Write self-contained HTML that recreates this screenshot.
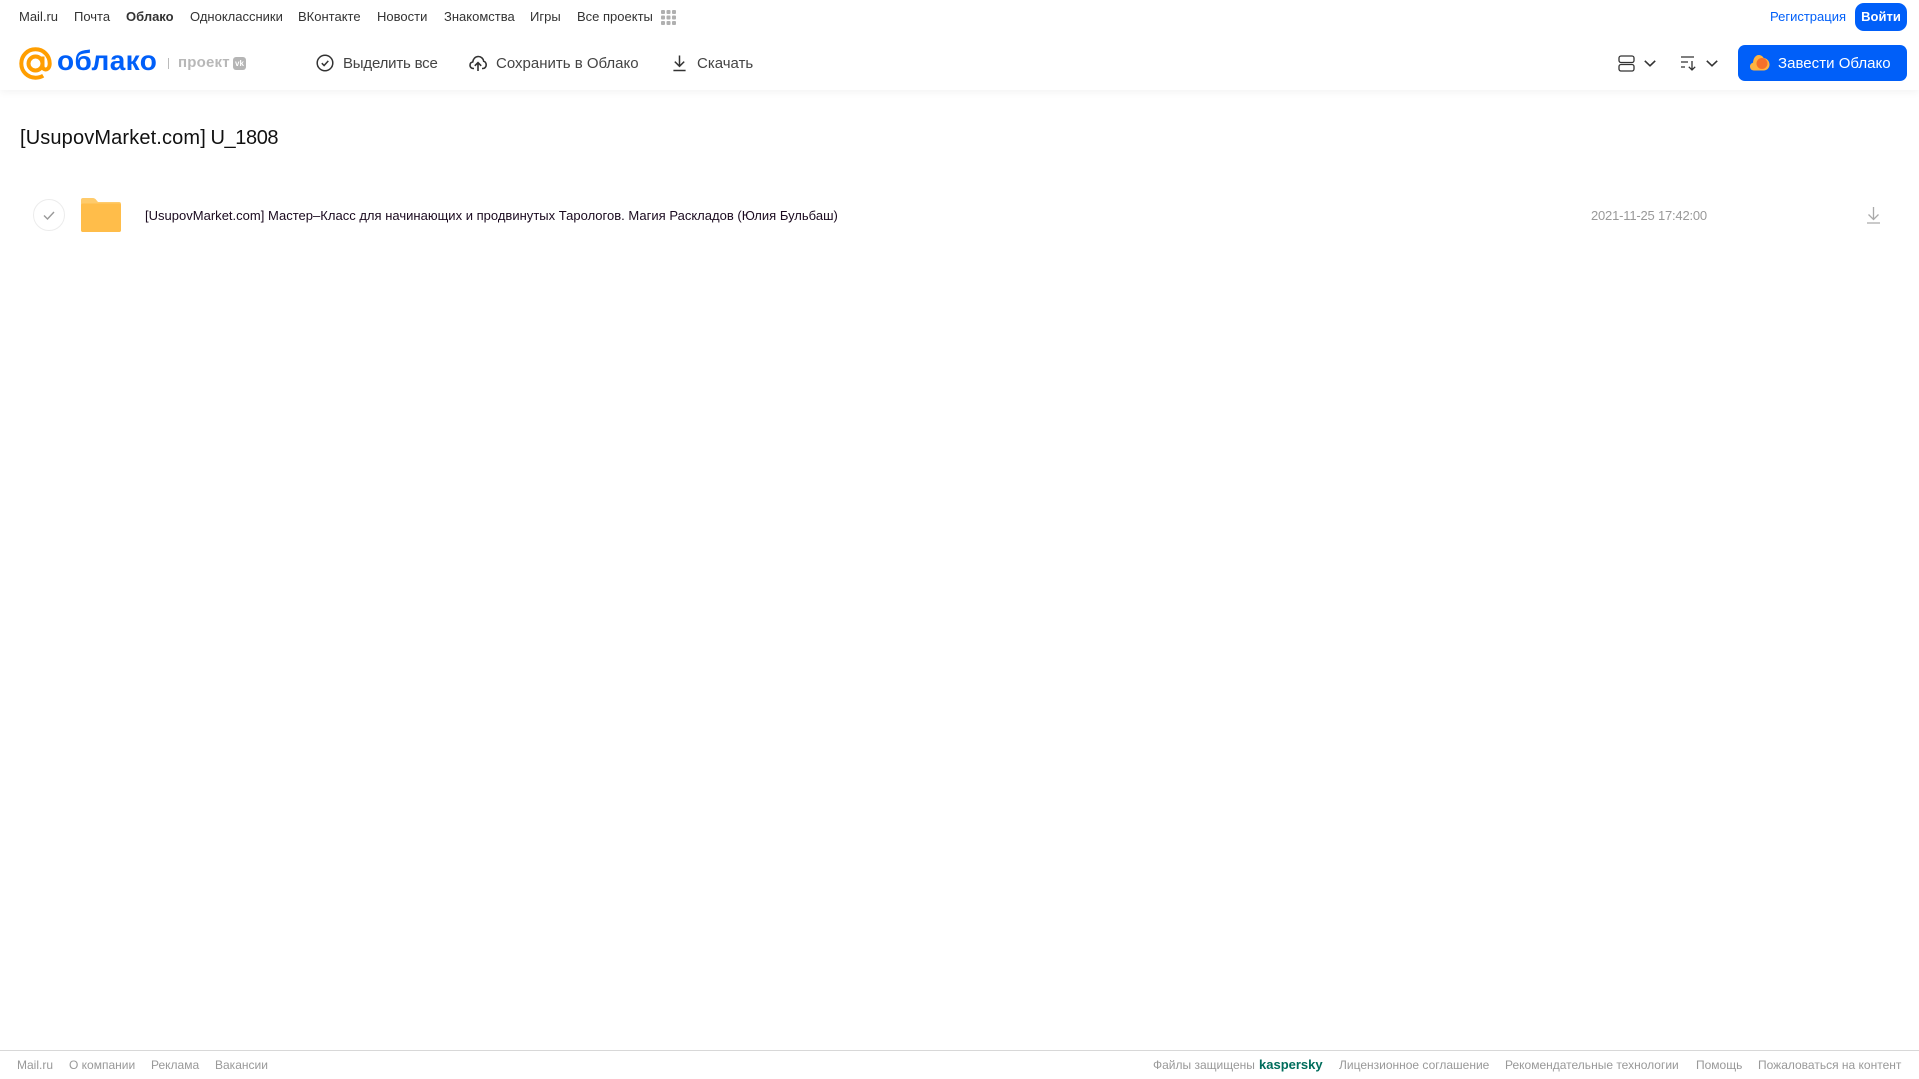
<!DOCTYPE html>
<html lang="ru">
<head>
<meta charset="utf-8">
<title>Облако</title>
<style>
html,body{margin:0;padding:0;background:#fff;}
body{width:1919px;height:1079px;position:relative;overflow:hidden;font-family:"Liberation Sans",Arial,sans-serif;}
.t{position:absolute;white-space:nowrap;line-height:18px;}
.n{top:8px;font-size:13px;color:#333;}
.a{top:55px;font-size:15px;color:#444;line-height:18px;}
.f{top:1056px;font-size:12px;color:#999;}
svg{position:absolute;overflow:visible;}
</style>
</head>
<body>
<div style="position:absolute;left:0;top:0;width:1919px;height:90px;background:#fff;box-shadow:0 2px 8px rgba(0,0,0,.05)"></div>

<span class="t n" style="left:19px">Mail.ru</span>
<span class="t n" style="left:74px">Почта</span>
<span class="t n" style="left:126px;font-weight:bold">Облако</span>
<span class="t n" style="left:190px">Одноклассники</span>
<span class="t n" style="left:298px">ВКонтакте</span>
<span class="t n" style="left:377px">Новости</span>
<span class="t n" style="left:444px">Знакомства</span>
<span class="t n" style="left:530px">Игры</span>
<span class="t n" style="left:577px">Все проекты</span>
<svg style="left:661px;top:10px" width="15" height="15" fill="#b0b0b0">
<rect x="0" y="0" width="4" height="4" rx="1"/><rect x="5.5" y="0" width="4" height="4" rx="1"/><rect x="11" y="0" width="4" height="4" rx="1"/>
<rect x="0" y="5.5" width="4" height="4" rx="1"/><rect x="5.5" y="5.5" width="4" height="4" rx="1"/><rect x="11" y="5.5" width="4" height="4" rx="1"/>
<rect x="0" y="11" width="4" height="4" rx="1"/><rect x="5.5" y="11" width="4" height="4" rx="1"/><rect x="11" y="11" width="4" height="4" rx="1"/>
</svg>

<span class="t" style="left:1770px;top:8px;font-size:13px;color:#005ff9">Регистрация</span>
<div style="position:absolute;left:1855px;top:3px;width:52px;height:28px;border-radius:9px;background:#005ff9;color:#fff;font-size:13px;font-weight:bold;text-align:center;line-height:27px">Войти</div>

<!-- logo -->
<svg style="left:19px;top:47px" width="33" height="33" viewBox="0 0 33 33" fill="none" stroke="#ff9e00" stroke-width="4">
<circle cx="16.5" cy="16.5" r="7"/>
<path d="M23.5 9.5v9.5c0 5 7.2 5 7.2-2.5C30.700 8.500 24.500 2.300 16.500 2.300S2.300 8.500 2.300 16.500 8.500 30.700 16.500 30.700c3 0 5.500-.7 7.700-2"/>
</svg>
<span class="t" style="left:57px;top:43px;font-size:28px;line-height:36px;font-weight:bold;color:#005ff9;letter-spacing:.4px">облако</span>
<div style="position:absolute;left:168px;top:58px;width:1px;height:11px;background:#bbb"></div>
<span class="t" style="left:178px;top:54px;font-size:15px;font-weight:bold;color:#b8b8b8;letter-spacing:.2px">проект</span>
<div style="position:absolute;left:233px;top:57px;width:13px;height:13px;border-radius:3px;background:#b5b5b5;color:#fff;font-size:8px;font-weight:bold;line-height:13px;text-align:center">vk</div>

<!-- toolbar -->
<svg style="left:316px;top:54px" width="18" height="18" viewBox="0 0 18 18" fill="none" stroke="#333" stroke-width="1.500">
<circle cx="9" cy="9" r="7.800"/><path d="M5.800 9.200l2.300 2.300 4.200-4.600"/>
</svg>
<span class="t a" style="left:343px;letter-spacing:-.2px">Выделить все</span>
<svg style="left:469px;top:54px" width="18" height="18" viewBox="0 0 18 18" fill="none" stroke="#333" stroke-width="1.600">
<path d="M5 14.500H4.300C2.400 14.500 1 13 1 11.200c0-1.600 1.100-2.900 2.700-3.200C4.100 5 6.200 2.500 9.300 2.500c2.800 0 5 2 5.400 4.700 1.500.4 2.500 2 2.500 3.700 0 1.900-1.400 3.600-3.300 3.600H13"/>
<path d="M9 17V9M5.800 11.800L9 8.600l3.200 3.200"/>
</svg>
<span class="t a" style="left:496px">Сохранить в Облако</span>
<svg style="left:672px;top:54px" width="15" height="18" viewBox="0 0 16 18" fill="none" stroke="#333" stroke-width="1.600">
<path d="M8 1v11M3 7.500l5 5 5-5M1.500 17h13"/>
</svg>
<span class="t a" style="left:697px">Скачать</span>

<svg style="left:1618px;top:55px" width="17" height="17" viewBox="0 0 17 17" fill="none" stroke="#333" stroke-width="1.300">
<rect x="1" y="1" width="15" height="6.500" rx="2"/><rect x="1" y="9.500" width="15" height="6.500" rx="2"/>
</svg>
<svg style="left:1644px;top:60px" width="12" height="7" viewBox="0 0 12 7" fill="none" stroke="#333" stroke-width="1.600"><path d="M.8.800L6 5.800 11.200.8"/></svg>
<svg style="left:1681px;top:56px" width="16" height="15" viewBox="0 0 16 15" fill="none" stroke="#333" stroke-width="1.300">
<path d="M0 1h13M0 6h7M0 11h4"/><path d="M11 5v9M7.800 10.800L11 14l3.200-3.200"/>
</svg>
<svg style="left:1706px;top:60px" width="12" height="7" viewBox="0 0 12 7" fill="none" stroke="#333" stroke-width="1.600"><path d="M.8.800L6 5.800 11.200.8"/></svg>

<div style="position:absolute;left:1738px;top:45px;width:169px;height:36px;border-radius:7px;background:#005ff9"></div>
<svg style="left:1750px;top:54px" width="20" height="17" viewBox="0 0 20 17">
<path d="M4 16.500C1.500 16.500 0 14.700 0 12.500c0-2 1.400-3.500 3-3.800C3.300 4.500 5.500 1 8.700 1c2.300 0 4 1.300 5 3 3 .2 5.800 3 5.800 6.500 0 3.400-2.500 6-5.800 6z" fill="#ffb340"/>
<circle cx="12" cy="9.500" r="5.500" fill="#f4702a"/>
</svg>
<span class="t" style="left:1778px;top:55px;font-size:15px;color:#fff;letter-spacing:.03px">Завести Облако</span>

<!-- content -->
<span class="t" style="left:20px;top:124px;font-size:20px;line-height:28px;color:#111;letter-spacing:.14px">[UsupovMarket.com]</span>
<span class="t" style="left:210.500px;top:124px;font-size:20px;line-height:28px;color:#111;letter-spacing:-.4px">U_1808</span>

<div style="position:absolute;left:33px;top:199px;width:30px;height:30px;border-radius:50%;border:1px solid #ececec"></div>
<svg style="left:43px;top:211px" width="12" height="9" viewBox="0 0 12 9" fill="none" stroke="#999" stroke-width="1.400"><path d="M1 4.500l3.500 3.500L11 1"/></svg>
<svg style="left:81px;top:198px" width="40" height="34" viewBox="0 0 40 34">
<path d="M2 0h9.500c2 0 3 .8 4 2.200L17 4h21a2 2 0 0 1 2 2v26a2 2 0 0 1-2 2H2a2 2 0 0 1-2-2V2a2 2 0 0 1 2-2z" fill="#ffcb6b"/>
<path d="M0 7.500a2 2 0 0 1 2-2h36a2 2 0 0 1 2 2V32a2 2 0 0 1-2 2H2a2 2 0 0 1-2-2z" fill="#ffbd4a"/>
</svg>
<span class="t" style="left:145px;top:207px;font-size:13px;color:#1a0a1f;letter-spacing:.01px">[UsupovMarket.com] Мастер–Класс для начинающих и продвинутых Тарологов. Магия Раскладов (Юлия Бульбаш)</span>
<span class="t" style="left:1591px;top:207px;font-size:13px;color:#999;letter-spacing:-.2px">2021-11-25 17:42:00</span>
<svg style="left:1867px;top:207px" width="13" height="17" viewBox="0 0 13 17" fill="none" stroke="#aaa" stroke-width="1.300">
<path d="M6.500 0v12M1.500 7.500l5 5 5-5M0 16h13"/>
</svg>

<!-- footer -->
<div style="position:absolute;left:0;top:1050px;width:1919px;height:1px;background:#d8d8d8"></div>
<span class="t f" style="left:17px">Mail.ru</span>
<span class="t f" style="left:69px">О компании</span>
<span class="t f" style="left:151px">Реклама</span>
<span class="t f" style="left:215px">Вакансии</span>
<span class="t f" style="left:1153px">Файлы защищены</span>
<span class="t f" style="left:1259px;font-weight:bold;font-size:13px;color:#006d5c">kaspersky</span>
<span class="t f" style="left:1339px">Лицензионное соглашение</span>
<span class="t f" style="left:1505px">Рекомендательные технологии</span>
<span class="t f" style="left:1696px">Помощь</span>
<span class="t f" style="left:1758px">Пожаловаться на контент</span>
</body>
</html>
